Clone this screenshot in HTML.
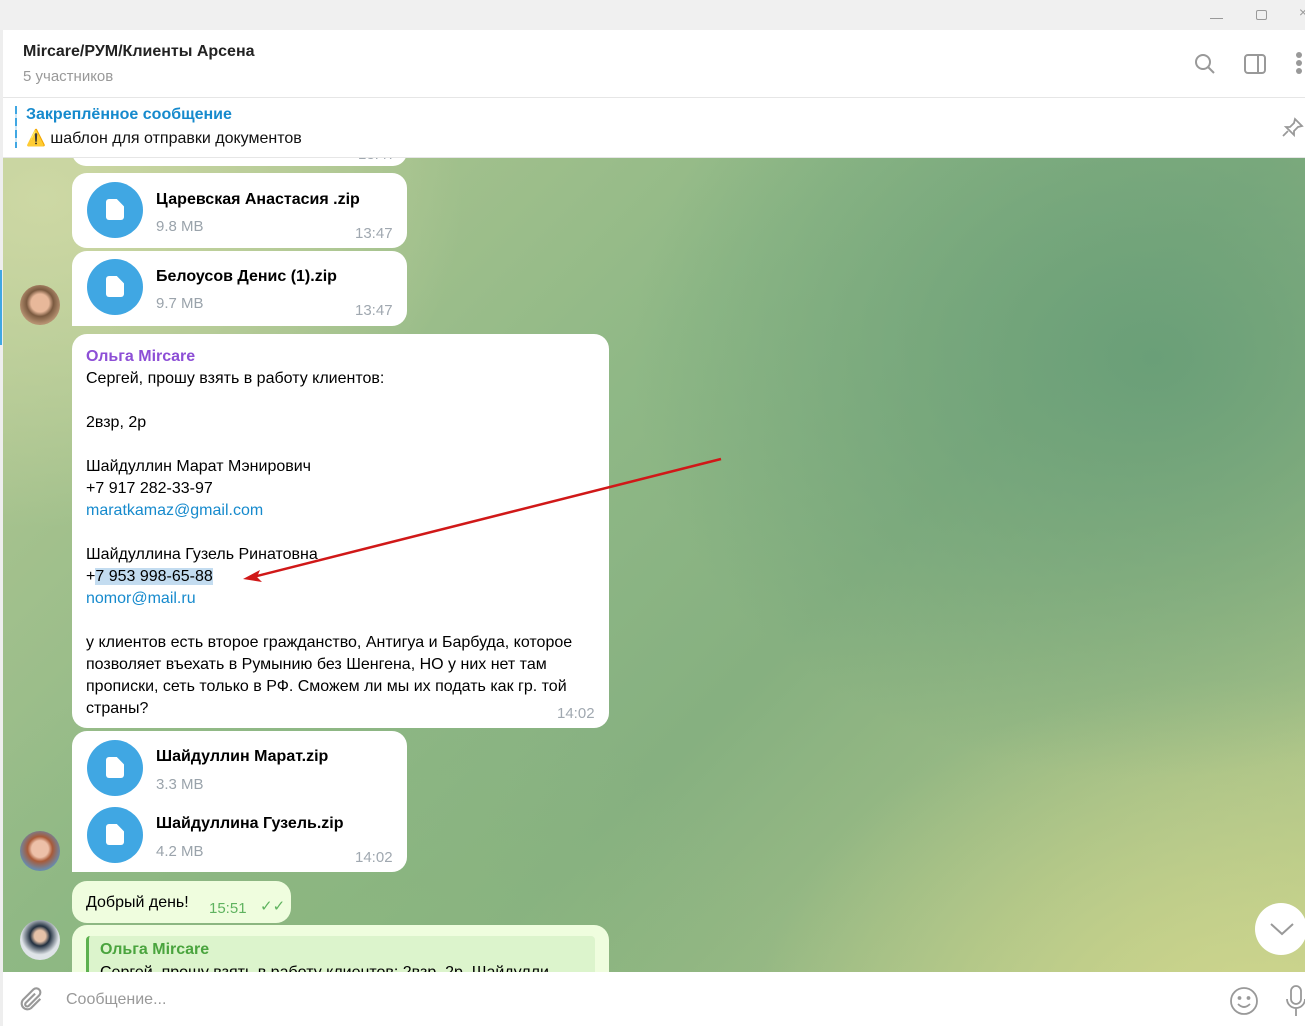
<!DOCTYPE html><html><head><meta charset="utf-8"><style>
*{margin:0;padding:0;box-sizing:border-box}
body{width:1305px;height:1026px;overflow:hidden;font-family:"Liberation Sans","DejaVu Sans",sans-serif;position:relative;background:#fff;color:#000}
.abs{position:absolute}
#top{left:0;top:0;width:1305px;height:30px;background:#f0f0f0}
#hdr{left:3px;top:30px;width:1302px;height:68px;background:#fff;border-bottom:1px solid #e6e6e6}
#pin{left:3px;top:98px;width:1302px;height:60px;background:#fff;border-bottom:1px solid #e6e6e6}
#chat{left:3px;top:158px;width:1302px;height:814px;overflow:hidden;
background:
radial-gradient(ellipse 520px 420px at 1150px 200px,#6a9f78,rgba(106,159,120,0) 100%),
radial-gradient(ellipse 500px 360px at 1250px 880px,#d0d68c,rgba(208,214,140,0) 100%),
radial-gradient(ellipse 420px 330px at 40px 40px,#cdd8a4,rgba(205,216,164,0) 100%),
radial-gradient(ellipse 500px 400px at 300px 900px,#8cb77f,rgba(140,183,127,0) 100%),
linear-gradient(135deg,#b5c993 0%,#8fb886 40%,#86b080 60%,#b3c88b 100%)}
#inp{left:3px;top:972px;width:1302px;height:54px;background:#fff}
.b{position:absolute;background:#fff;border-radius:15px}
.fi{position:absolute;width:56px;height:56px;border-radius:50%;background:#40a7e3}
.fi::after{content:"";position:absolute;left:19px;top:17px;width:18px;height:21px;background:#fff;border-radius:3px;clip-path:polygon(0 0,60% 0,100% 35%,100% 100%,0 100%)}
.fn{position:absolute;font-size:16px;font-weight:bold}
.fs{position:absolute;font-size:15px;color:#9aa3ab}
.tm{position:absolute;font-size:15px;color:#a0a8b0}
.av{position:absolute;width:40px;height:40px;border-radius:50%}
.t{font-size:16px;line-height:22px}
a{color:#168acd;text-decoration:none}
</style></head><body>
<div class="abs" id="top">
<div class="abs" style="left:1210px;top:18px;width:13px;height:1px;background:#999"></div>
<div class="abs" style="left:1256px;top:10px;width:11px;height:10px;border:1px solid #999;border-radius:2px"></div>
<div class="abs" style="left:1299px;top:4px;color:#999;font-size:14px">×</div>
</div>
<div class="abs" id="hdr">
<div class="abs" style="left:20px;top:13px;font-size:16px;font-weight:bold;color:#222">Mircare/РУМ/Клиенты Арсена</div>
<div class="abs" style="left:20px;top:38px;font-size:15px;color:#999">5 участников</div>
<svg class="abs" style="left:1190px;top:22px" width="24" height="24" viewBox="0 0 24 24" fill="none" stroke="#999" stroke-width="2"><circle cx="10" cy="10" r="7"/><path d="M15 15l6 6"/></svg>
<svg class="abs" style="left:1240px;top:22px" width="24" height="24" viewBox="0 0 24 24" fill="none" stroke="#999" stroke-width="2"><rect x="2" y="3" width="20" height="18" rx="3"/><path d="M15 3v18"/></svg>
<div class="abs" style="left:1293px;top:22px;width:6px;height:6px;border-radius:50%;background:#999;box-shadow:0 8px 0 #999,0 16px 0 #999"></div>
</div>
<div class="abs" id="pin">
<div class="abs" style="left:12px;top:8px;width:2px;height:42px;background:repeating-linear-gradient(#40a7e3 0 8px,#cfe6f5 8px 12px)"></div>
<div class="abs" style="left:23px;top:8px;font-size:16px;color:#168acd;font-weight:600">Закреплённое сообщение</div>
<div class="abs" style="left:23px;top:30px;font-size:16px;color:#111"><span style="color:#f5b800">⚠️</span> шаблон для отправки документов</div>
<svg class="abs" style="left:1278px;top:18px" width="24" height="24" viewBox="0 0 24 24" fill="none" stroke="#999" stroke-width="1.8"><path d="M14 3l7 7-4 1-4 4 0 4-8-8 4 0 4-4z"/><path d="M7 15l-5 5"/></svg>
</div>
<div class="abs" id="chat">
<div class="b" style="left:69px;top:-20px;width:335px;height:28px"></div>
<div class="tm" style="left:355px;top:-12px">13:47</div>
<div class="b" style="left:69px;top:15px;width:335px;height:75px"></div>
<div class="fi" style="left:84px;top:24px"></div>
<div class="fn" style="left:153px;top:33px">Царевская Анастасия .zip</div>
<div class="fs" style="left:153px;top:60px">9.8 MB</div>
<div class="tm" style="left:352px;top:67px">13:47</div>
<div class="b" style="left:69px;top:93px;width:335px;height:75px;border-bottom-left-radius:0"></div>
<div class="fi" style="left:84px;top:101px"></div>
<div class="fn" style="left:153px;top:110px">Белоусов Денис (1).zip</div>
<div class="fs" style="left:153px;top:137px">9.7 MB</div>
<div class="tm" style="left:352px;top:144px">13:47</div>
<div class="av" style="left:17px;top:127px;background:radial-gradient(circle at 50% 45%,#e8b89a 0 30%,#7a5a40 45%,#b59070 70%)"></div>
<div class="b" style="left:69px;top:176px;width:537px;height:394px"></div>
<div class="abs t" style="left:83px;top:188px;width:515px">
<div style="color:#8d4fd6;font-weight:600">Ольга Mircare</div>
<div>Сергей, прошу взять в работу клиентов:</div><div>&nbsp;</div>
<div>2взр, 2р</div><div>&nbsp;</div>
<div>Шайдуллин Марат Мэнирович</div><div>+7 917 282-33-97</div><div><a>maratkamaz@gmail.com</a></div><div>&nbsp;</div>
<div>Шайдуллина Гузель Ринатовна</div><div>+<span style="background:#c3dcf0">7 953 998-65-88</span></div><div><a>nomor@mail.ru</a></div><div>&nbsp;</div>
<div>у клиентов есть второе гражданство, Антигуа и Барбуда, которое позволяет въехать в Румынию без Шенгена, НО у них нет там прописки, сеть только в РФ. Сможем ли мы их подать как гр. той страны?</div>
</div>
<div class="tm" style="left:554px;top:547px">14:02</div>
<svg class="abs" style="left:0;top:0" width="800" height="600"><path d="M718 301L250 419" stroke="#d01818" stroke-width="2.5"/><path d="M240 421l17-9-3 7 5 5z" fill="#d01818"/></svg>
<div class="b" style="left:69px;top:573px;width:335px;height:141px;border-bottom-left-radius:0"></div>
<div class="fi" style="left:84px;top:582px"></div>
<div class="fn" style="left:153px;top:590px">Шайдуллин Марат.zip</div>
<div class="fs" style="left:153px;top:618px">3.3 MB</div>
<div class="fi" style="left:84px;top:649px"></div>
<div class="fn" style="left:153px;top:657px">Шайдуллина Гузель.zip</div>
<div class="fs" style="left:153px;top:685px">4.2 MB</div>
<div class="tm" style="left:352px;top:691px">14:02</div>
<div class="av" style="left:17px;top:673px;background:radial-gradient(circle at 50% 45%,#edc0a8 0 28%,#a85a38 42%,#6a8aaa 70%)"></div>
<div class="b" style="left:69px;top:723px;width:219px;height:42px;background:#effdde"></div>
<div class="abs" style="left:83px;top:736px;font-size:16px">Добрый день!</div>
<div class="abs" style="left:206px;top:742px;font-size:15px;color:#5fb35f">15:51</div>
<div class="abs" style="left:257px;top:739px;font-size:15px;color:#5fb35f">✓✓</div>
<div class="av" style="left:17px;top:762px;background:radial-gradient(circle at 50% 40%,#e6c2a8 0 18%,#223040 32%,#dfe4e8 60%)"></div>
<div class="b" style="left:69px;top:767px;width:537px;height:80px;background:#effdde"></div>
<div class="abs" style="left:83px;top:778px;width:509px;height:60px;background:#dcf4cc;border-left:3px solid #5db14f;border-radius:4px"></div>
<div class="abs" style="left:97px;top:783px;font-size:16px;color:#4aa43e;font-weight:600">Ольга Mircare</div>
<div class="abs" style="left:97px;top:806px;font-size:16px;white-space:nowrap;width:480px;overflow:hidden">Сергей, прошу взять в работу клиентов: 2взр, 2р, Шайдулли</div>
<div class="abs" style="left:1252px;top:745px;width:52px;height:52px;border-radius:50%;background:#fff"></div>
<svg class="abs" style="left:1266px;top:762px" width="26" height="18" viewBox="0 0 26 18" fill="none" stroke="#999" stroke-width="2"><path d="M2 4l11 10 11-10"/></svg>
</div>
<div class="abs" style="left:0;top:30px;width:3px;height:996px;background:#eee"></div>
<div class="abs" style="left:0;top:270px;width:2px;height:75px;background:#40a7e3"></div>
<div class="abs" id="inp">
<svg class="abs" style="left:14px;top:14px" width="28" height="28" viewBox="0 0 24 24" fill="none" stroke="#999" stroke-width="1.8"><path d="M20 11l-8 8a5 5 0 01-7-7l9-9a3.3 3.3 0 015 5l-9 9a1.7 1.7 0 01-2.5-2.5l8-8"/></svg>
<div class="abs" style="left:63px;top:19px;font-size:16px;color:#999">Сообщение...</div>
<svg class="abs" style="left:1226px;top:14px" width="30" height="30" viewBox="0 0 30 30" fill="none" stroke="#999" stroke-width="1.8"><circle cx="15" cy="15" r="13"/><circle cx="10.5" cy="12" r="1" fill="#999"/><circle cx="19.5" cy="12" r="1" fill="#999"/><path d="M9 18q6 6 12 0"/></svg>
<svg class="abs" style="left:1282px;top:12px" width="22" height="34" viewBox="0 0 22 34" fill="none" stroke="#999" stroke-width="1.8"><rect x="6" y="2" width="10" height="18" rx="5"/><path d="M2 15a9 9 0 0018 0M11 24v8"/></svg>
</div>
</body></html>
